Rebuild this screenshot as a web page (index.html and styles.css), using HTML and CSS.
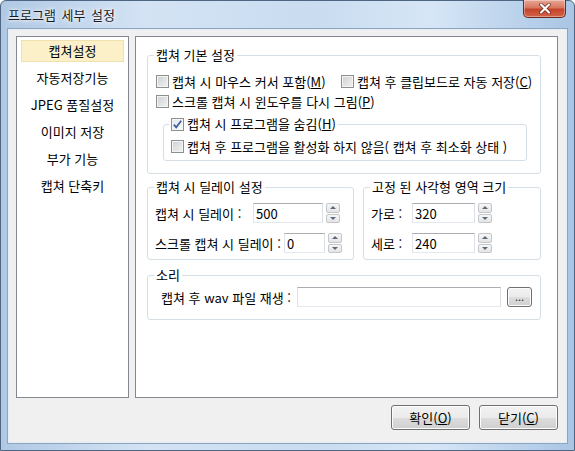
FILE: index.html
```html
<!DOCTYPE html>
<html lang="ko">
<head>
    <meta charset="UTF-8">
    <meta name="viewport" content="width=device-width, initial-scale=1.0">
    <title>프로그램 세부 설정</title>
    <link rel="stylesheet" href="styles.css">
</head>
<body>
    <div class="window">
        <div class="titlebar">
            <span class="title">프로그램 세부 설정</span>
            <button class="close" type="button">
                <svg width="14" height="11" viewBox="0 0 14 11">
                    <path d="M3 1.5 L11 9.5 M11 1.5 L3 9.5" stroke="#6e2416" stroke-width="3.6" stroke-linecap="round"/>
                    <path d="M3 1.5 L11 9.5 M11 1.5 L3 9.5" stroke="#fff" stroke-width="2.2" stroke-linecap="round"/>
                </svg>
            </button>
        </div>

        <div class="client">
            <div class="main">
                <ul class="menu">
                    <li class="active">캡쳐설정</li>
                    <li>자동저장기능</li>
                    <li>JPEG 품질설정</li>
                    <li>이미지 저장</li>
                    <li>부가 기능</li>
                    <li>캡쳐 단축키</li>
                </ul>

                <div class="panel">
                    <fieldset class="group">
                        <legend>캡쳐 기본 설정</legend>
                        <div class="group-body basic">
                            <div class="line">
                                <label class="check first"><span class="box"></span>캡쳐 시 마우스 커서 포함(<u>M</u>)</label>
                                <label class="check"><span class="box"></span>캡쳐 후 클립보드로 자동 저장(<u>C</u>)</label>
                            </div>
                            <label class="check"><span class="box"></span>스크롤 캡쳐 시 윈도우를 다시 그림(<u>P</u>)</label>

                            <fieldset class="group inner">
                                <legend>
                                    <label class="check"><span class="box checked">
                                        <svg width="11" height="11" viewBox="0 0 11 11"><path d="M1.8 5.6 L4.2 8.4 L9.2 1.8" fill="none" stroke="#3f5f9a" stroke-width="1.8"/></svg>
                                    </span>캡쳐 시 프로그램을 숨김(<u>H</u>)</label>
                                </legend>
                                <div class="group-body inner-body">
                                    <label class="check"><span class="box"></span>캡쳐 후 프로그램을 활성화 하지 않음( 캡쳐 후 최소화 상태 )</label>
                                </div>
                            </fieldset>
                        </div>
                    </fieldset>

                    <div class="group-row">
                        <fieldset class="group delay">
                            <legend>캡쳐 시 딜레이 설정</legend>
                            <div class="group-body fields">
                                <div class="field">
                                    <span class="field-label" style="width: 98px">캡쳐 시 딜레이 :</span>
                                    <input class="text" type="text" value="500" style="width: 70px">
                                    <span class="spin"><span><i class="up"></i></span><span><i class="down"></i></span></span>
                                </div>
                                <div class="field">
                                    <span class="field-label" style="width: 129px">스크롤 캡쳐 시 딜레이 :</span>
                                    <input class="text" type="text" value="0" style="width: 41px">
                                    <span class="spin"><span><i class="up"></i></span><span><i class="down"></i></span></span>
                                </div>
                            </div>
                        </fieldset>

                        <fieldset class="group size">
                            <legend>고정 된 사각형 영역 크기</legend>
                            <div class="group-body fields">
                                <div class="field">
                                    <span class="field-label" style="width: 41px">가로 :</span>
                                    <input class="text" type="text" value="320" style="width: 63px">
                                    <span class="spin"><span><i class="up"></i></span><span><i class="down"></i></span></span>
                                </div>
                                <div class="field">
                                    <span class="field-label" style="width: 41px">세로 :</span>
                                    <input class="text" type="text" value="240" style="width: 63px">
                                    <span class="spin"><span><i class="up"></i></span><span><i class="down"></i></span></span>
                                </div>
                            </div>
                        </fieldset>
                    </div>

                    <fieldset class="group sound">
                        <legend>소리</legend>
                        <div class="group-body sound-body">
                            <div class="field">
                                <span class="field-label" style="width: 136px">캡쳐 후 wav 파일 재생 :</span>
                                <input class="text" type="text" value="" style="width: 204px">
                                <button class="browse" type="button">...</button>
                            </div>
                        </div>
                    </fieldset>
                </div>
            </div>

            <div class="buttons">
                <button class="btn" type="button">확인(<u>O</u>)</button>
                <button class="btn" type="button">닫기(<u>C</u>)</button>
            </div>
        </div>
    </div>
</body>
</html>
```

FILE: styles.css
```css
body {
    margin: 0;
    font-family: "Noto Sans CJK KR", "Liberation Sans", sans-serif;
    font-size: 13px;
    color: #000;
    background: #fff;
}
u {
    text-decoration: underline;
    text-underline-offset: 1px;
}
.window {
    width: 575px;
    height: 451px;
    box-sizing: border-box;
    display: flex;
    flex-direction: column;
    border: 1px solid #4e6683;
    border-radius: 6px 6px 0 0;
    background: linear-gradient(to right, #afc8e4 0%, #d3e3f4 25%, #c9dcf0 55%, #d6e6f6 75%, #a9c5e4 100%);
}
.titlebar {
    height: 28px;
    display: flex;
    justify-content: space-between;
    align-items: flex-start;
    padding-left: 7px;
}
.title {
    line-height: 27px;
    word-spacing: 2px;
    color: #1b1b1b;
    text-shadow: 0 0 6px #fff, 0 0 3px #fff;
}
.close {
    width: 43px;
    height: 18px;
    margin: -1px 8px 0 0;
    padding: 0;
    display: flex;
    align-items: center;
    justify-content: center;
    border: 1px solid #6a2a20;
    border-top: 0;
    border-radius: 0 0 5px 5px;
    background: linear-gradient(#e8a797 0%, #d87760 45%, #c5432a 55%, #d4654a 100%);
    box-shadow: inset 0 0 0 1px rgba(255,255,255,0.35);
}
.client {
    flex: 1;
    margin: 0 7px 7px 7px;
    display: flex;
    flex-direction: column;
    padding: 6px 8px 12px 7px;
    background: #f0f0f0;
    border: 1px solid #e4ecf5;
    box-shadow: 0 0 0 1px #8ea5c0;
}
.main {
    flex: 1;
    display: flex;
    gap: 6px;
    min-height: 0;
}

/* left menu */
.menu {
    width: 113px;
    box-sizing: border-box;
    margin: 0;
    padding: 3px 4px;
    list-style: none;
    background: #fff;
    border: 1px solid #828790;
}
.menu li {
    height: 22px;
    line-height: 20px;
    box-sizing: border-box;
    margin-bottom: 5px;
    text-align: center;
    white-space: nowrap;
    border: 1px solid transparent;
}
.menu li.active {
    background: #fcf0c9;
    border-color: #f0e0ad;
}

/* right panel */
.panel {
    flex: 1;
    padding: 11px 16px 0 11px;
    background: #fff;
    border: 1px solid #828790;
}
.group {
    margin: 0;
    padding: 0;
    min-width: 0;
    border: 1px solid #d5dfe5;
    border-radius: 3px;
}
.group legend {
    margin-left: 6px;
    padding: 0 2px;
    line-height: 14px;
}
.group-body {
    display: flex;
    flex-direction: column;
}
.basic {
    padding: 9px 0 12px 8px;
}
.line {
    display: flex;
}
.check {
    display: flex;
    align-items: center;
    height: 20px;
    white-space: nowrap;
}
.check.first {
    width: 185px;
}
.box {
    width: 13px;
    height: 13px;
    box-sizing: border-box;
    margin-right: 3px;
    flex-shrink: 0;
    display: flex;
    align-items: center;
    justify-content: center;
    border: 1px solid #8e8f8f;
    background: linear-gradient(135deg, #cdd0d4, #f3f3f3);
    box-shadow: inset 0 0 0 1px #f4f4f4;
}
.box.checked {
    background: linear-gradient(135deg, #dfe6ef, #fbfbfb);
}
.inner {
    margin: 3px 13px 0 7px;
}
.inner legend {
    margin-left: 5px;
    line-height: 20px;
}
.inner-body {
    padding: 2px 0 4px 7px;
}

.group-row {
    display: flex;
    gap: 9px;
    margin-top: 6px;
}
.delay {
    width: 207px;
    box-sizing: border-box;
}
.size {
    flex: 1;
}
.fields {
    padding: 9px 0 6px 7px;
    gap: 10px;
}
.field {
    display: flex;
    align-items: center;
    height: 20px;
}
.field-label {
    white-space: nowrap;
    flex-shrink: 0;
}
.text {
    height: 20px;
    box-sizing: border-box;
    margin: 0;
    padding: 0 2px;
    font: inherit;
    border: 1px solid;
    border-color: #abadb3 #dbdfe6 #e3e9ef #e2e3ea;
    background: #fff;
    outline: none;
}
.spin {
    width: 14px;
    height: 20px;
    margin-left: 3px;
    display: flex;
    flex-direction: column;
    gap: 1px;
}
.spin span {
    flex: 1;
    display: flex;
    align-items: center;
    justify-content: center;
    border: 1px solid #c4c6c9;
    border-radius: 2px;
    background: linear-gradient(#f7f7f7, #e4e4e4);
}
.spin i {
    width: 0;
    height: 0;
    border-left: 3px solid transparent;
    border-right: 3px solid transparent;
}
.spin .up {
    border-bottom: 3px solid #5a6a7e;
}
.spin .down {
    border-top: 3px solid #5a6a7e;
}

.sound {
    margin-top: 8px;
}
.sound-body {
    padding: 5px 0 12px 13px;
}
.browse {
    width: 25px;
    height: 20px;
    margin-left: 6px;
    padding: 0 0 4px;
    font: inherit;
    font-size: 11px;
    color: #333;
    border: 1px solid #707070;
    border-radius: 3px;
    background: linear-gradient(#f2f2f2 0%, #ebebeb 50%, #dddddd 51%, #cfcfcf 100%);
    box-shadow: inset 0 0 0 1px #fcfcfc;
}

/* bottom buttons */
.buttons {
    display: flex;
    justify-content: flex-end;
    gap: 9px;
    margin-top: 7px;
}
.btn {
    width: 79px;
    height: 25px;
    padding: 0;
    font: inherit;
    color: #000;
    border: 1px solid #707070;
    border-radius: 3px;
    background: linear-gradient(#f2f2f2 0%, #ebebeb 50%, #dddddd 51%, #cfcfcf 100%);
    box-shadow: inset 0 0 0 1px #fcfcfc;
}
```
